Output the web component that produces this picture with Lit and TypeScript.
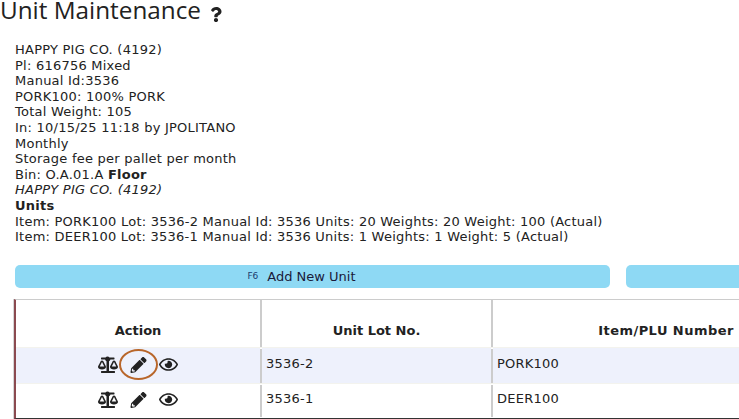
import {LitElement, css, html} from 'lit';
import {customElement} from 'lit/decorators.js';

const scale = html`<svg class="icon scale" viewBox="0 0 640 512"><path d="M256 336c0-16 2-9-85-183-18-35-68-35-86 0C-3 329 0 321 0 336c0 44 57 80 128 80s128-36 128-80zM128 176l72 144H56l72-144zm512 160c0-16 2-9-85-183-18-35-68-35-86 0-88 176-85 168-85 183 0 44 57 80 128 80s128-36 128-80zm-200-16 72-144 72 144H440zm88 144H352V153c24-10 41-32 46-57h114c9 0 16-7 16-16V48c0-9-7-16-16-16H368C353 13 330 0 304 0s-49 13-64 32H112c-9 0-16 7-16 16v32c0 9 7 16 16 16h114c5 25 22 47 46 57v311H112c-9 0-16 7-16 16v32c0 9 7 16 16 16h416c9 0 16-7 16-16v-32c0-9-7-16-16-16z"/></svg>`;
const pencil = html`<svg class="icon pencil" viewBox="0 0 512 512"><path d="M497.9 142.1l-46.1 46.1c-4.7 4.7-12.3 4.7-17 0l-111-111c-4.7-4.7-4.7-12.3 0-17l46.1-46.1c18.7-18.7 49.1-18.7 67.900 0l60.1 60.1c18.8 18.7 18.8 49.1 0 67.900zM284.2 99.800L21.600 362.400.400 483.900c-2.900 16.400 11.400 30.600 27.800 27.800l121.500-21.300 262.600-262.600c4.700-4.700 4.700-12.300 0-17l-111-111c-4.800-4.700-12.400-4.700-17.100 0zM88 424h48v36.300l-64.500 11.300-31.100-31.100L51.700 376H88v48z"/></svg>`;
const eye = html`<svg class="icon eye" viewBox="0 0 576 512"><path d="M288 144a110.9 110.9 0 0 0-31.2 5 55.4 55.4 0 0 1 7.2 27 56 56 0 0 1-56 56 55.4 55.4 0 0 1-27-7.2A111.7 111.7 0 1 0 288 144zm284.5 97.4C518.3 135.6 410.9 64 288 64S57.7 135.6 3.5 241.4a32.4 32.4 0 0 0 0 29.2C57.7 376.4 165.1 448 288 448s230.3-71.6 284.5-177.4a32.4 32.4 0 0 0 0-29.2zM288 400c-98.7 0-189.2-55-237.5-144C98.8 167 189.3 112 288 112s189.2 55 237.5 144C477.200 345 386.700 400 288 400z"/></svg>`;
const question = html`<svg class="help" viewBox="0 0 384 512"><path d="M202 0C122 0 70 33 29 92c-8 11-5 26 5 34l43 33c11 8 27 6 35-5 25-32 44-50 84-50 31 0 70 20 70 51 0 23-19 35-50 52-36 20-84 46-84 109v10c0 13 11 24 24 24h72c13 0 24-11 24-24v-6c0-44 128-46 128-164C380 67 289 0 202 0zm-10 377c-39 0-71 32-71 71s32 64 71 64 71-25 71-64-32-71-71-71z"/></svg>`;

const rows = [
  {lot: '3536-2', item: 'PORK100', marked: true},
  {lot: '3536-1', item: 'DEER100', marked: false},
];

@customElement('app-root')
export class AppRoot extends LitElement {
  static styles = css`
    :host {
      display: block;
      width: 739px;
      height: 419px;
      overflow: hidden;
      background: #fff;
      color: #222;
      font-family: 'DejaVu Sans', Verdana, sans-serif;
      font-size: 13px;
      line-height: 15.6px;
      letter-spacing: 0.235px;
    }
    h1 {
      display: flex;
      align-items: center;
      gap: 9px;
      margin: 0;
      height: 20px;
      font-family: 'Open Sans', sans-serif;
      font-weight: 400;
      font-size: 24.3px;
      line-height: 20px;
      letter-spacing: 0;
      white-space: nowrap;
    }
    .help {
      width: 12px;
      height: 15px;
      margin-top: 8px;
      fill: #222;
    }
    .info {
      padding: 22px 0 0 15px;
      white-space: nowrap;
    }
    .buttons {
      display: flex;
      gap: 16px;
      margin: 20px 0 0 15px;
      width: 900px;
    }
    .button {
      flex: 0 0 595px;
      height: 23px;
      padding: 1px 22px 0 0;
      box-sizing: border-box;
      display: flex;
      align-items: center;
      justify-content: center;
      gap: 9px;
      background: #8ed9f4;
      border-radius: 5px;
      color: #1a1a3a;
      letter-spacing: 0;
    }
    .button small {
      font-size: 9px;
      color: #1c3a6e;
    }
    .table {
      display: grid;
      grid-template-columns: 244px 2px 229px 2px 346px;
      width: 880px;
      margin: 11px 0 0 14px;
      padding-bottom: 1px;
      border-top: 1px solid #ccc;
      border-left: 2px solid #8b4a50;
      border-bottom: 1px solid #333;
      box-shadow: -1px 0 0 #d5d5d5;
    }
    .cell {
      height: 33px;
      padding: 0 4px 2px;
      box-sizing: border-box;
      display: flex;
      align-items: center;
      white-space: nowrap;
    }
    .sep {
      background: #ccc;
    }
    .row-sep {
      margin-top: 1px;
    }
    .head {
      height: 47px;
      padding: 0 0 8px;
      justify-content: center;
      align-items: flex-end;
      font-weight: 700;
      letter-spacing: 0;
    }
    .head.wide {
      letter-spacing: 0.45px;
    }
    .rule {
      grid-column: 1 / -1;
      height: 1px;
      background: #f3f3ee;
    }
    .marked {
      height: 35px;
      background: #eef1fc;
    }
    .actions {
      justify-content: center;
      gap: 12px;
      padding: 0 0 1px;
    }
    .icon {
      display: block;
      height: 17px;
      fill: #222;
    }
    .scale { width: 20px; }
    .pencil { width: 17px; height: 16px; }
    .eye { width: 19px; }
    .ring {
      display: flex;
      align-items: center;
      justify-content: center;
      flex: none;
      width: 39px;
      height: 31px;
      margin: 0 -11px;
      border: 2px solid transparent;
      border-radius: 50%;
      box-sizing: border-box;
    }
    .marked .ring {
      border-color: #b8662a;
    }
  `;

  render() {
    return html`
      <h1>Unit Maintenance ${question}</h1>
      <div class="info">
        HAPPY PIG CO. (4192)<br />
        Pl: 616756 Mixed<br />
        Manual Id:3536<br />
        PORK100: 100% PORK<br />
        Total Weight: 105<br />
        In: 10/15/25 11:18 by JPOLITANO<br />
        Monthly<br />
        Storage fee per pallet per month<br />
        Bin: O.A.01.A <b>Floor</b><br />
        <i>HAPPY PIG CO. (4192)</i><br />
        <b>Units</b><br />
        Item: PORK100 Lot: 3536-2 Manual Id: 3536 Units: 20 Weights: 20 Weight: 100 (Actual)<br />
        Item: DEER100 Lot: 3536-1 Manual Id: 3536 Units: 1 Weights: 1 Weight: 5 (Actual)
      </div>
      <div class="buttons">
        <div class="button"><small>F6</small> Add New Unit</div>
        <div class="button"></div>
      </div>
      <div class="table">
        <div class="cell head">Action</div>
        <div class="sep"></div>
        <div class="cell head">Unit Lot No.</div>
        <div class="sep"></div>
        <div class="cell head wide">Item/PLU Number</div>
        ${rows.map(
          (row) => html`
            <div class="rule"></div>
            <div class="cell actions ${row.marked ? 'marked' : ''}">
              ${scale}<span class="ring">${pencil}</span>${eye}
            </div>
            <div class="sep row-sep"></div>
            <div class="cell ${row.marked ? 'marked' : ''}">${row.lot}</div>
            <div class="sep row-sep"></div>
            <div class="cell ${row.marked ? 'marked' : ''}">${row.item}</div>
          `,
        )}
      </div>
    `;
  }
}
